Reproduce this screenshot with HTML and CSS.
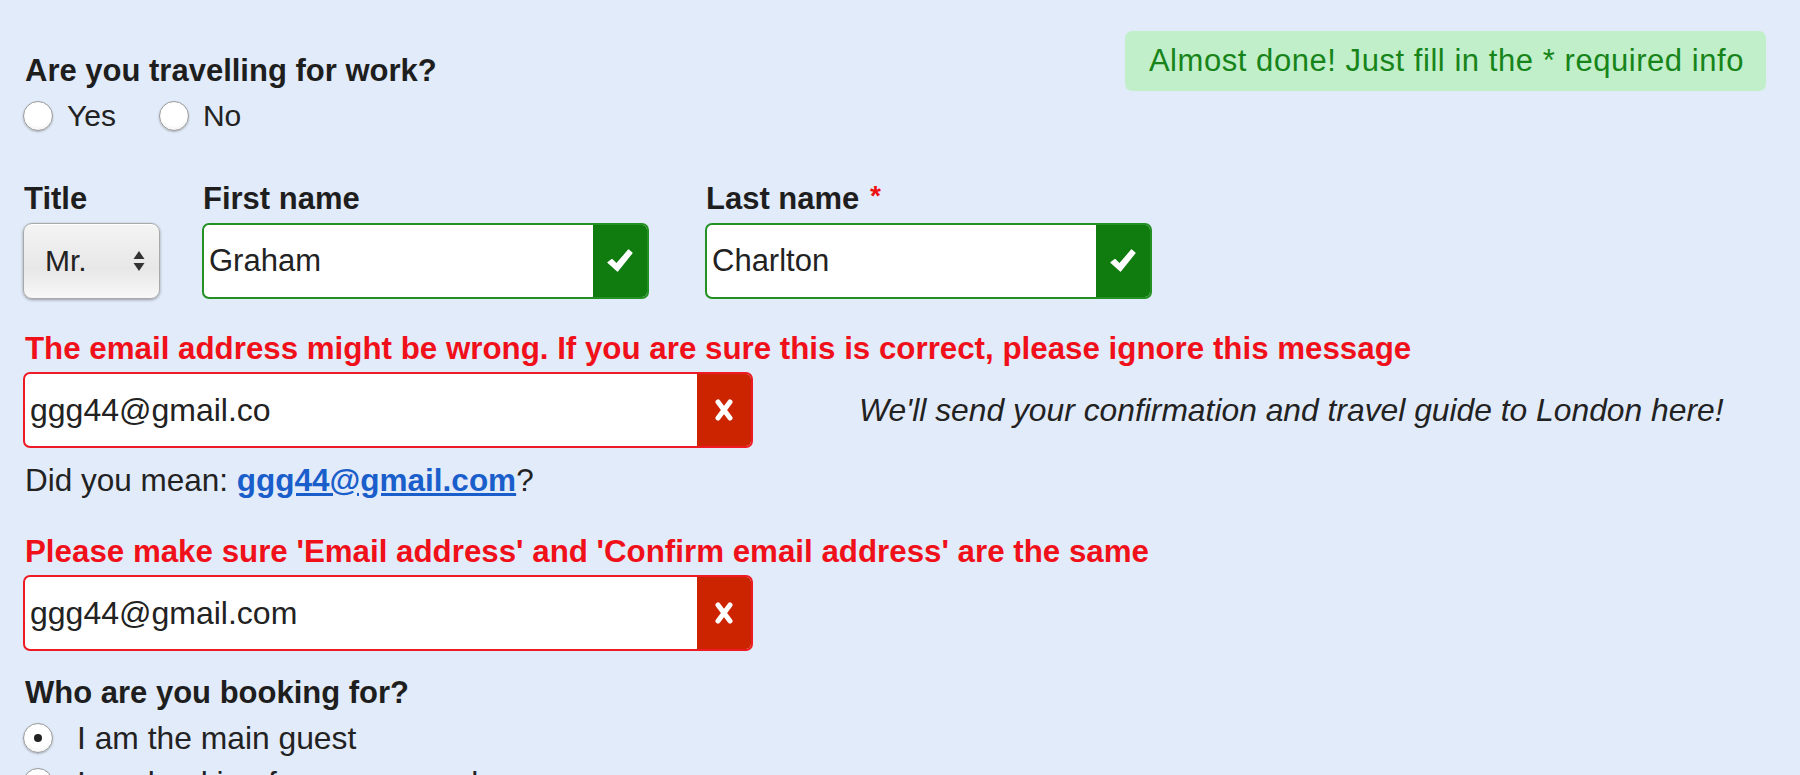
FILE: index.html
```html
<!DOCTYPE html>
<html lang="en">
<head>
<meta charset="utf-8">
<title>Booking details</title>
<link rel="stylesheet" href="styles.css">
</head>
<body>
<div class="page">
  <div class="top">
    <div class="work">
      <div class="q">Are you travelling for work?</div>
      <div class="radios">
        <label class="radio"><span class="circle"></span>Yes</label>
        <label class="radio"><span class="circle"></span>No</label>
      </div>
    </div>
    <div class="badge">Almost done! Just fill in the * required info</div>
  </div>

  <div class="names">
    <div class="field">
      <div class="label">Title</div>
      <div class="select">
        <span>Mr.</span>
        <svg class="arrows" width="12" height="22" viewBox="0 0 12 22"><path d="M6 1 L11.5 9 L0.5 9 Z M6 21 L11.5 13 L0.5 13 Z" fill="#333"/></svg>
      </div>
    </div>
    <div class="field">
      <div class="label">First name</div>
      <div class="input ok">
        <span class="value">Graham</span>
        <span class="state"><svg width="26" height="24" viewBox="0 0 26 24"><path d="M1 13.5 L5 10.5 L9.5 15 L21.5 1 L25 4 L10.5 22 Z" fill="#fff" stroke="#fff" stroke-width="1.2" stroke-linejoin="round"/></svg></span>
      </div>
    </div>
    <div class="field">
      <div class="label">Last name <span class="req">*</span></div>
      <div class="input ok">
        <span class="value">Charlton</span>
        <span class="state"><svg width="26" height="24" viewBox="0 0 26 24"><path d="M1 13.5 L5 10.5 L9.5 15 L21.5 1 L25 4 L10.5 22 Z" fill="#fff" stroke="#fff" stroke-width="1.2" stroke-linejoin="round"/></svg></span>
      </div>
    </div>
  </div>

  <div class="error err1">The email address might be wrong. If you are sure this is correct, please ignore this message</div>
  <div class="email-row">
    <div class="input bad wide">
      <span class="value">ggg44@gmail.co</span>
      <span class="state"><svg width="20" height="24" viewBox="0 0 20 24"><path d="M4 4 L16 20 M16 4 L4 20" stroke="#fff" stroke-width="5" stroke-linecap="round"/></svg></span>
    </div>
    <div class="hint">We'll send your confirmation and travel guide to London here!</div>
  </div>
  <div class="mean">Did you mean: <a href="#">ggg44@gmail.com</a>?</div>

  <div class="error err2">Please make sure 'Email address' and 'Confirm email address' are the same</div>
  <div class="input bad wide">
    <span class="value">ggg44@gmail.com</span>
    <span class="state"><svg width="20" height="24" viewBox="0 0 20 24"><path d="M4 4 L16 20 M16 4 L4 20" stroke="#fff" stroke-width="5" stroke-linecap="round"/></svg></span>
  </div>

  <div class="q who">Who are you booking for?</div>
  <div class="list">
    <label class="radio"><span class="circle checked"></span>I am the main guest</label>
    <label class="radio"><span class="circle"></span>I am booking for someone else</label>
  </div>
</div>
</body>
</html>
```

FILE: styles.css
```css
html, body {
  margin: 0;
  padding: 0;
  background: #e2ebf9;
  height: 100%;
  overflow: hidden;
}
body {
  font-family: "Liberation Sans", Arial, sans-serif;
  color: #222;
  font-size: 31px;
}
.page {
  padding: 31px 34px 0 25px;
  display: flex;
  flex-direction: column;
  align-items: flex-start;
}
.top {
  display: flex;
  justify-content: space-between;
  align-items: flex-start;
  align-self: stretch;
}
.work {
  margin-top: 22px;
}
.q {
  font-weight: bold;
  font-size: 31px;
  line-height: 36px;
  color: #1e1e1e;
}
.radios {
  display: flex;
  gap: 43px;
  margin-top: 9px;
  margin-left: -2px;
}
.radio {
  display: flex;
  align-items: center;
  gap: 14px;
  font-size: 30px;
  line-height: 36px;
}
.circle {
  width: 28px;
  height: 28px;
  border-radius: 50%;
  border: 1px solid #9a9a9a;
  background: radial-gradient(circle at 50% 40%, #fff 55%, #eaeaea 100%);
  box-shadow: 0 1px 2px rgba(0,0,0,0.25);
  display: flex;
  align-items: center;
  justify-content: center;
  flex: none;
}
.circle.checked::after {
  content: "";
  width: 8px;
  height: 8px;
  border-radius: 50%;
  background: #222;
}
.badge {
  background: #c1efc9;
  color: #17841a;
  border-radius: 7px;
  height: 60px;
  padding: 0 22px 0 24px;
  display: flex;
  align-items: center;
  font-size: 31px;
  letter-spacing: 0.55px;
}
.names {
  display: flex;
  margin-top: 47px;
  margin-left: -2px;
}
.field {
  display: flex;
  flex-direction: column;
  gap: 6px;
}
.field + .field {
  margin-left: 42px;
}
.field + .field + .field {
  margin-left: 56px;
}
.label {
  font-weight: bold;
  font-size: 31px;
  line-height: 36px;
  color: #1e1e1e;
  padding-left: 1px;
}
.req {
  color: #ee1111;
  font-size: 28px;
  line-height: 0;
  vertical-align: 4px;
  margin-left: 2px;
}
.select {
  width: 137px;
  height: 76px;
  box-sizing: border-box;
  border: 1px solid #a8a8a8;
  border-radius: 9px;
  background: linear-gradient(#f4f4f4, #e7e7e7 60%, #f8f8f8);
  box-shadow: 0 1px 3px rgba(0,0,0,0.35), inset 0 1px 0 #fff;
  display: flex;
  align-items: center;
  justify-content: space-between;
  padding: 0 14px 0 21px;
  font-size: 30px;
  color: #222;
}
.input {
  width: 447px;
  height: 76px;
  box-sizing: border-box;
  border: 2px solid #239023;
  border-radius: 7px;
  background: #fff;
  display: flex;
  align-items: stretch;
  overflow: hidden;
}
.input .value {
  flex: 1;
  display: flex;
  align-items: center;
  padding-left: 5px;
  font-size: 31px;
  color: #222;
}
.input .state {
  width: 54px;
  display: flex;
  align-items: center;
  justify-content: center;
  background: #107c10;
}
.input.bad {
  border-color: #ee1a24;
}
.input.bad .state {
  background: #cc2400;
}
.input.wide {
  width: 730px;
  margin-left: -2px;
}
.input.bad .value {
  font-size: 32px;
}
.error {
  color: #f0101a;
  font-weight: bold;
  font-size: 31.3px;
  line-height: 36px;
}
.err1 {
  margin-top: 32px;
  margin-bottom: 5px;
}
.email-row {
  display: flex;
  align-items: center;
}
.hint {
  font-style: italic;
  font-size: 31.8px;
  margin-left: 106px;
  color: #222;
}
.mean {
  margin-top: 14px;
  font-size: 31.5px;
  line-height: 36px;
}
.mean a {
  color: #1a5ecb;
  font-weight: bold;
  text-decoration: underline;
}
.err2 {
  margin-top: 36px;
  margin-bottom: 5px;
}
.who {
  margin-top: 24px;
}
.list {
  display: flex;
  flex-direction: column;
  gap: 9px;
  margin-top: 9px;
  margin-left: -2px;
}
.list .radio {
  gap: 24px;
  font-size: 31.8px;
}
```
